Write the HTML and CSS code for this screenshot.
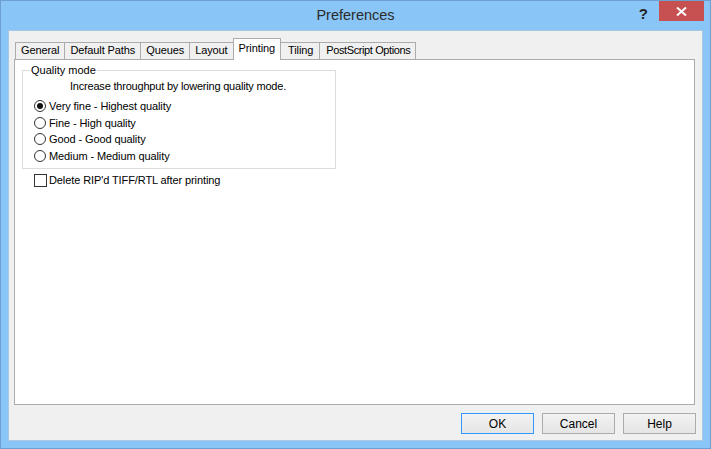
FILE: index.html
```html
<!DOCTYPE html>
<html lang="en">
<head>
    <meta charset="UTF-8">
    <title>Preferences</title>
    <link rel="stylesheet" href="styles.css">
</head>
<body>
    <div class="window">
        <div class="titlebar">
            <span class="title">Preferences</span>
            <span class="help-btn">?</span>
            <span class="close-btn">
                <svg width="11" height="9" viewBox="0 0 11 9">
                    <path d="M1 0.5 L10 8.5 M10 0.5 L1 8.5" stroke="#fff" stroke-width="2"/>
                </svg>
            </span>
        </div>
        <div class="client">
            <div class="tabs">
                <div class="tab">General</div>
                <div class="tab">Default Paths</div>
                <div class="tab">Queues</div>
                <div class="tab">Layout</div>
                <div class="tab active">Printing</div>
                <div class="tab">Tiling</div>
                <div class="tab tight">PostScript Options</div>
            </div>
            <div class="panel">
                <fieldset class="group">
                    <legend>Quality mode</legend>
                    <p class="hint">Increase throughput by lowering quality mode.</p>
                    <div class="option"><span class="radio checked"></span>Very fine - Highest quality</div>
                    <div class="option"><span class="radio"></span>Fine - High quality</div>
                    <div class="option"><span class="radio"></span>Good - Good quality</div>
                    <div class="option"><span class="radio"></span>Medium - Medium quality</div>
                </fieldset>
                <div class="option check-row"><span class="checkbox"></span>Delete RIP'd TIFF/RTL after printing</div>
            </div>
            <div class="buttons">
                <button class="btn default">OK</button>
                <button class="btn">Cancel</button>
                <button class="btn">Help</button>
            </div>
        </div>
    </div>
</body>
</html>
```

FILE: styles.css
```css
/* dialog: Preferences */
* {
    box-sizing: border-box;
}

body {
    margin: 0;
    font-family: "Liberation Sans", Arial, sans-serif;
    font-size: 11px;
    color: #000;
}

.window {
    position: relative;
    width: 711px;
    height: 449px;
    background-color: #89c5f6;
    border: 1px solid #6d9fcf;
    padding: 0 7px 7px 7px;
}

.titlebar {
    height: 29px;
    text-align: center;
}

.title {
    display: inline-block;
    margin-top: 6px;
    font-size: 14.5px;
    color: #2b2b2b;
}

.help-btn {
    position: absolute;
    top: 4px;
    right: 62px;
    font-size: 15px;
    font-weight: bold;
    color: #222;
}

.close-btn {
    position: absolute;
    top: 0;
    right: 6px;
    width: 45px;
    height: 20px;
    background-color: #c75050;
    display: flex;
    align-items: center;
    justify-content: center;
}

.client {
    height: 411px;
    background-color: #f0f0f0;
    border: 1px solid #aac7e4;
    padding: 7px 7px 0 5px;
}

.tabs {
    display: flex;
    align-items: flex-end;
    height: 21px;
    padding-left: 1px;
    position: relative;
    z-index: 1;
}

.tab {
    height: 17px;
    line-height: 15px;
    padding: 0 5px;
    border: 1px solid #acacac;
    border-bottom: none;
    border-right: none;
    background-color: #f0f0f0;
    letter-spacing: -0.1px;
}

.tab:last-child {
    border-right: 1px solid #acacac;
}

.tab.active {
    line-height: 19px;
    padding: 0 5px 0 5px;
    background-color: #fff;
    border-right: 1px solid #acacac;
    margin-bottom: -1px;
    height: 22px;
}

.tab.active + .tab {
    border-left: none;
    padding: 0 6px 0 7px;
}

.tab.tight {
    letter-spacing: -0.4px;
    padding: 0 5px 0 6px;
}

.panel {
    height: 346px;
    background-color: #fff;
    border: 1px solid #acacac;
    padding: 4px 0 0 7px;
}

.group {
    width: 314px;
    height: 105px;
    margin: 0;
    padding: 0 0 0 11px;
    border: 1px solid #dcdcdc;
}

.group legend {
    padding: 0 1px;
    margin-left: -4px;
    font-size: 11px;
}

.hint {
    margin: 3px 0 5px 36px;
    line-height: 14px;
    letter-spacing: -0.2px;
}

.option {
    display: flex;
    align-items: center;
    height: 16.5px;
    letter-spacing: -0.1px;
}

.radio {
    width: 12px;
    height: 12px;
    border: 1px solid #333;
    border-radius: 50%;
    background-color: #fff;
    margin-right: 3px;
    display: flex;
    align-items: center;
    justify-content: center;
}

.radio.checked::after {
    content: "";
    width: 6px;
    height: 6px;
    border-radius: 50%;
    background-color: #111;
}

.check-row {
    margin: 4px 0 0 12px;
    height: 14px;
}

.checkbox {
    width: 13px;
    height: 13px;
    border: 1px solid #333;
    background-color: #fff;
    margin-right: 2px;
}

.buttons {
    display: flex;
    justify-content: flex-end;
    gap: 8px;
    margin-top: 8px;
    margin-right: -1px;
}

.btn {
    width: 73px;
    height: 21px;
    font-family: "Liberation Sans", Arial, sans-serif;
    font-size: 12px;
    color: #000;
    background: linear-gradient(#f2f2f2, #e5e5e5);
    border: 1px solid #acacac;
    padding: 0;
}

.btn.default {
    border-color: #3399ff;
}
```
